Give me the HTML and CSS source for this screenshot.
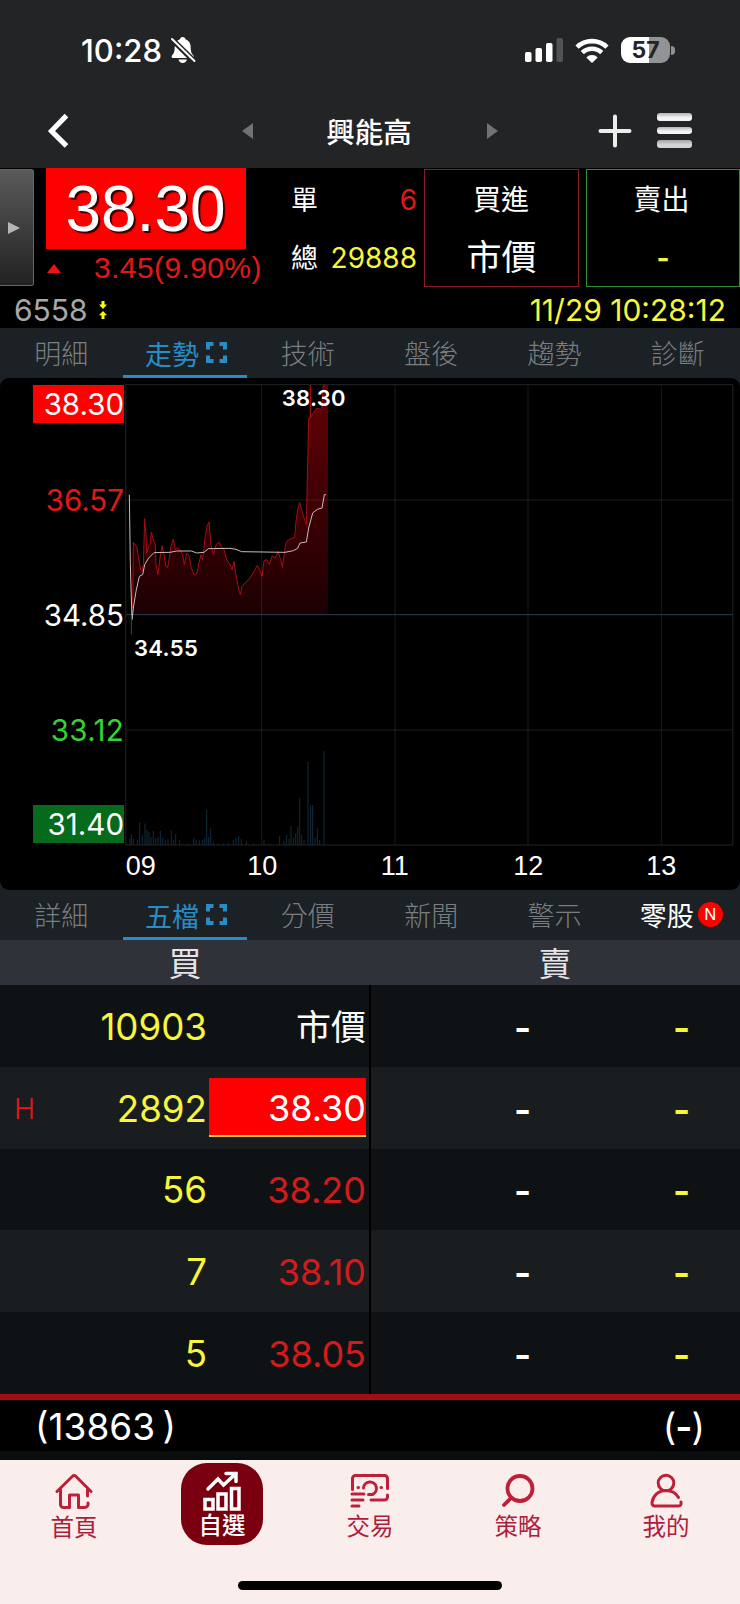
FILE: index.html
```
<!DOCTYPE html>
<html lang="zh-Hant">
<head>
<meta charset="UTF-8">
<meta name="viewport" content="width=device-width, initial-scale=1">
<title>興能高 6558</title>
<link rel="stylesheet" href="styles.css">
</head>
<body>

<header class="top">
  <div class="status">
    <span class="clock">10:28</span>
    <svg class="bell" width="26" height="28" viewBox="0 0 26 28">
      <path fill="#fff" d="M12.700 1c1.600 0 2.500 1 2.800 2.200 3.500 1.200 5.200 4 5.200 7.800 0 5 1 6.500 2.700 8.600.8 1 .4 2.400-1 2.400H3c-1.400 0-1.800-1.400-1-2.400 1.700-2.100 2.700-3.600 2.700-8.600 0-3.800 1.700-6.600 5.200-7.800C10.200 2 11.100 1 12.700 1zM8.500 23.500h8.400c-.5 2-2 3.500-4.200 3.500s-3.700-1.500-4.200-3.500z"/>
      <path stroke="#222426" stroke-width="5.500" d="M1 2.500l23.500 23"/>
      <path stroke="#fff" stroke-width="2" stroke-linecap="round" d="M2 3l22.500 22"/>
    </svg>
    <svg class="signal" width="38" height="24" viewBox="0 0 38 24">
      <g fill="#fff"><rect y="14" width="6.500" height="10" rx="1.800"/><rect x="10.500" y="10" width="6.500" height="14" rx="1.800"/><rect x="21" y="5" width="6.500" height="19" rx="1.800"/></g>
      <rect x="31.500" width="6.500" height="24" rx="1.800" fill="#505254"/>
    </svg>
    <svg class="wifi" width="34" height="25" viewBox="0 0 34 25" fill="none" stroke="#fff" stroke-width="4.600">
      <path d="M2 9.200a21.500 21.500 0 0 1 30 0M7.300 14.600a14 14 0 0 1 19.400 0"/>
      <path fill="#fff" stroke="none" d="M17 25l-5.700-5.600a8 8 0 0 1 11.400 0z"/>
    </svg>
    <span class="battery">57</span>
    <span class="battery-tip"></span>
  </div>
  <nav class="nav">
    <svg width="20" height="36" viewBox="0 0 20 36" fill="none" stroke="#fff" stroke-width="5.200"><path d="M18.500 2.500L3.500 18l15 15"/></svg>
    <svg class="prev" width="11" height="16" viewBox="0 0 11 16"><path fill="#707375" d="M11 0v16L0 8z"/></svg>
    <h1>興能高</h1>
    <svg width="11" height="16" viewBox="0 0 11 16"><path fill="#707375" d="M0 0v16l11-8z"/></svg>
    <svg class="add" width="34" height="34" viewBox="0 0 34 34" stroke="#eceded" stroke-width="4" stroke-linecap="round"><path d="M17 2.500v29M2.500 17h29"/></svg>
    <div class="menu"><i></i><i></i><i></i></div>
  </nav>
</header>

<section class="quote">
  <div class="handle"><svg width="12" height="12" viewBox="0 0 12 12"><path fill="#b5b5b5" d="M0 0v12l12-6z"/></svg></div>
  <div class="price">
    <strong>38.30</strong>
    <p><svg width="14" height="9" viewBox="0 0 14 9"><path fill="#f31111" d="M7 0l7 9H0z"/></svg><span>3.45(9.90%)</span></p>
  </div>
  <dl class="volume">
    <dt>單</dt><dd class="up">6</dd>
    <dt>總</dt><dd>29888</dd>
  </dl>
  <div class="deal buy"><span>買進</span><b>市價</b></div>
  <div class="deal sell"><span>賣出</span><b>-</b></div>
</section>

<div class="info">
  <span class="code">6558</span>
  <svg width="8" height="18" viewBox="0 0 8 18"><path fill="#ff0" d="M2.500 0h3v3.500H8L4 8 0 3.500h2.500zM4 10l4 4.300H5.500V18h-3v-3.700H0z"/></svg>
  <time>11/29 10:28:12</time>
</div>

<div class="tabs">
  <span>明細</span>
  <span class="on">走勢<svg width="21" height="21" viewBox="0 0 21 21"><path d="M7.500 2H2v5.500M13.500 2H19v5.500M19 13.500V19h-5.500M7.500 19H2v-5.500"/></svg></span>
  <span>技術</span><span>盤後</span><span>趨勢</span><span>診斷</span>
</div>

<section class="chart-bg">
<div class="chart">
  <div class="axis">
    <span class="limit-up">38.30</span>
    <span class="up">36.57</span>
    <span>34.85</span>
    <span class="down">33.12</span>
    <span class="limit-down">31.40</span>
  </div>
  <svg class="plot" viewBox="372 0 1848 1536">
    <defs>
      <linearGradient id="area" gradientUnits="userSpaceOnUse" x1="0" y1="20" x2="0" y2="710">
        <stop offset="0" stop-color="#640006"/><stop offset="1" stop-color="#1c0003"/>
      </linearGradient>
    </defs>
    <path class="area" d="M396 710L400 493l10 12 5 30 7 40 4 5 4-20 4-138 4 48 2 55 6-20 4-5 4-38 6 23 6 15 2 60 6 30 6-50 6-37 6 27 6 35 5 3 5-28 5-35 7-22 6 32 6-5 8 5 8 15 5 30 7-35 8 10 6 35 8 20 8-2 7-33 6-25 5 15 7-65 6-35 6-13 6 68 7 30 8-30 10-8 6 13 8 10 8 30 10 15 6 15 6-25 6 40 8 45 5 15 5-25 9-10 15-15 12-20 10-18 8 16 6 17 6-47 8-3 8 15 8-25 10 5 8-20 8 25 5 23 6-43 5-30 8-10 18-7 4-48 6-40 5-17 6 22 7 25 7 20 3-140 4-180h5V20v100l9-15 10-15 15 5 5-75h14v690z"/>
    <path class="line" d="M398 690L400 493l10 12 5 30 7 40 4 5 4-20 4-138 4 48 2 55 6-20 4-5 4-38 6 23 6 15 2 60 6 30 6-50 6-37 6 27 6 35 5 3 5-28 5-35 7-22 6 32 6-5 8 5 8 15 5 30 7-35 8 10 6 35 8 20 8-2 7-33 6-25 5 15 7-65 6-35 6-13 6 68 7 30 8-30 10-8 6 13 8 10 8 30 10 15 6 15 6-25 6 40 8 45 5 15 5-25 9-10 15-15 12-20 10-18 8 16 6 17 6-47 8-3 8 15 8-25 10 5 8-20 8 25 5 23 6-43 5-30 8-10 18-7 4-48 6-40 5-17 6 22 7 25 7 20 3-140 4-180h5V20v100l9-15 10-15 15 5 5-75h8"/>
    <path class="grid" d="M378 366H2198M378 1056H2198M785 21V1401M1185 21V1401M1584 21V1401M1984 21V1401"/>
    <path class="frame" d="M377.500 20H2198.500V1401H377.500z"/>
    <path class="base" d="M378 710H2198"/>
    <path class="vol" d="M390 1401v-20M394 1401v-32M400 1401v-18M412 1401v-15M419 1401v-68M427 1401v-30M435 1401v-65M441 1401v-45M447 1401v-40M453 1401v-24M460 1401v-42M467 1401v-20M474 1401v-24M481 1401v-42M488 1401v-22M496 1401v-14M504 1401v-17M514 1401v-44M521 1401v-16M527 1401v-33M539 1401v-15M550 1401v-4M564 1401v-4M581 1401v-21M588 1401v-16M598 1401v-14M608 1401v-16M614 1401v-22M620 1401v-105M626 1401v-24M632 1401v-50M640 1401v-8M655 1401v-5M670 1401v-5M685 1401v-7M700 1401v-15M708 1401v-22M716 1401v-28M724 1401v-18M739 1401v-12M760 1401v-4M792 1401v-16M810 1401v-4M839 1401v-28M852 1401v-12M860 1401v-30M867 1401v-18M873 1401v-57M880 1401v-22M887 1401v-35M893 1401v-55M899 1401v-141M905 1401v-30M912 1401v-15M924 1401v-250M932 1401v-120M938 1401v-120M945 1401v-22M952 1401v-50M959 1401v-14M972 1401v-282"/>
    <path class="avg" d="M388 350l3 210 5 165 4-35 8-50 10-45 10-5 6-30 12-20 16-16 48-1 20-4h45l15 6 22-2 13-11 65-1 18 3 17 7 130 2 25-5 13-7 7-16 19-3 7-42 12-45 14-11 14-4 7-40h5"/>
    <path class="low" d="M394 712v57"/>
    <g class="mark"><text x="845" y="84">38.30</text><text x="402" y="834">34.55</text></g>
    <g class="hours"><text x="422" y="1490">09</text><text x="787" y="1490">10</text><text x="1184" y="1490">11</text><text x="1585" y="1490">12</text><text x="1984" y="1490">13</text></g>
  </svg>
</div>
</section>

<div class="tabs">
  <span>詳細</span>
  <span class="on">五檔<svg width="21" height="21" viewBox="0 0 21 21"><path d="M7.500 2H2v5.500M13.500 2H19v5.500M19 13.500V19h-5.500M7.500 19H2v-5.500"/></svg></span>
  <span>分價</span><span>新聞</span><span>警示</span>
  <span class="odd">零股<em>N</em></span>
</div>

<section class="book">
  <div class="head"><span>買</span><span>賣</span></div>
  <div class="row"><div class="bid"><i></i><span class="qty">10903</span><span class="px market">市價</span></div><div class="ask"><b>-</b><b class="qty">-</b></div></div>
  <div class="row"><div class="bid"><i>H</i><span class="qty">2892</span><span class="px hit">38.30</span></div><div class="ask"><b>-</b><b class="qty">-</b></div></div>
  <div class="row"><div class="bid"><i></i><span class="qty">56</span><span class="px up">38.20</span></div><div class="ask"><b>-</b><b class="qty">-</b></div></div>
  <div class="row"><div class="bid"><i></i><span class="qty">7</span><span class="px up">38.10</span></div><div class="ask"><b>-</b><b class="qty">-</b></div></div>
  <div class="row"><div class="bid"><i></i><span class="qty">5</span><span class="px up">38.05</span></div><div class="ask"><b>-</b><b class="qty">-</b></div></div>
</section>
<div class="sum"><span>(13863 )</span><span>(<b>-</b>)</span></div>

<footer class="dock">
  <div class="menu-items">
    <a class="home">
      <svg width="38" height="37" viewBox="0 0 38 37"><path d="M2 18.500L17.500 3.200a2.300 2.300 0 0 1 3.300 0L36 18.500M5.500 16v15.500a3 3 0 0 0 3 3h6V22h9v12.500h6a3.500 3.500 0 0 0 3.500-4.500M32.500 16v7"/></svg>首頁</a>
    <a class="sel">
      <svg width="40" height="40" viewBox="0 0 40 40"><path d="M6 18l10-10 5.500 6L33.500 3M24 2.500h10v8M3 28.500h8V38H3zM16 23h8v15h-8zM29.500 17.500H37V38h-7.500z"/></svg>自選</a>
    <a>
      <svg width="40" height="36" viewBox="0 0 40 36"><path d="M2.500 16.500V5.500a3 3 0 0 1 3-3h29a3 3 0 0 1 3 3v10M37.500 22v2a3 3 0 0 1-3 3H21M2 21h12M2 27h11M2 33h7M13.500 15a6.500 6.500 0 1 1 9 6.500h-4M8 14.500h.5M31 14.500h.5"/></svg>交易</a>
    <a>
      <svg width="36" height="36" viewBox="0 0 36 36"><circle cx="20" cy="15.500" r="12.500" stroke-width="3.800"/><path stroke-width="3.800" d="M11.500 24.500L4 32"/></svg>策略</a>
    <a>
      <svg width="36" height="36" viewBox="0 0 36 36"><circle cx="18" cy="10" r="7.800"/><path d="M30.500 24.500C28 20 23.500 17.500 18 17.500c-7.500 0-13 5-14 12-.2 2 1 3.500 2.500 3.500h24c2 0 3-1.500 2.500-4"/></svg>我的</a>
  </div>
  <div class="home-bar"></div>
</footer>

</body>
</html>
```

FILE: styles.css
```
:root {
  --red: #e01818;
  --yellow: #f6f63c;
  --blue: #2a8cc4;
  --tab: #1b2124;
}

* { box-sizing: border-box; }

body {
  margin: 0;
  width: 740px;
  height: 1604px;
  overflow: hidden;
  background: #000;
  color: #fff;
  font-family: Inter, "Noto Sans CJK TC", sans-serif;
  font-weight: 400;
}

svg { display: block; flex: none; }
i, em { font-style: normal; }

/* ---- status bar + title ---- */
.top {
  height: 168px;
  background: #222426;
}

.status {
  display: flex;
  align-items: center;
  height: 100px;
  padding-left: 81px;
}

.clock { width: 89px; font-size: 31px; font-weight: 500; }
.bell { margin-right: 329px; }
.signal { margin-right: 12px; }
.wifi { margin-right: 12px; }

.battery {
  width: 49px;
  height: 26px;
  border-radius: 9px;
  background: linear-gradient(90deg, #fff 57%, #919395 57%);
  color: #222426;
  font-size: 23px;
  font-weight: 700;
  line-height: 26px;
  text-align: center;
}

.battery-tip {
  width: 4px;
  height: 9px;
  margin-left: 1px;
  border-radius: 0 4px 4px 0;
  background: #919395;
}

.nav {
  display: flex;
  align-items: center;
  height: 61px;
  padding-left: 48px;
}

.nav h1 {
  width: 234px;
  margin: 0;
  padding-right: 2px;
  font-size: 28.500px;
  font-weight: 500;
  text-align: center;
}

.prev { margin-left: 174px; }
.add { margin-left: 100px; }

.menu {
  display: flex;
  flex-direction: column;
  gap: 6px;
  margin-left: 25px;
}

.menu i {
  width: 35px;
  height: 7.500px;
  border-radius: 3px;
  background: linear-gradient(#b4b4b8, #f4f4f6 60%);
}
.menu i:last-child { background: linear-gradient(#a4a4a8, #d4d4d6 60%); }

/* ---- quote ---- */
.quote {
  display: flex;
  height: 120px;
}

.handle {
  display: flex;
  align-items: center;
  width: 34px;
  height: 117px;
  margin-top: 1px;
  padding-left: 8px;
  border: 1px solid #666;
  border-left: 0;
  border-radius: 0 3px 3px 0;
  background: linear-gradient(#5a5a5a, #222);
}

.price { width: 250px; padding-left: 12px; }

.price strong {
  display: block;
  width: 200px;
  height: 81px;
  padding-right: 1px;
  background: #f00;
  font: 64px/83px "Liberation Sans", sans-serif;
  text-align: center;
  text-shadow: 2px 2px 1px #300;
}

.price p {
  display: flex;
  align-items: center;
  gap: 33px;
  height: 38px;
  margin: 0;
  padding-left: 1px;
  color: var(--red);
  font: 30px "Liberation Sans", sans-serif;
  letter-spacing: .4px;
}

.volume {
  display: grid;
  grid-template-columns: 28px 1fr;
  grid-auto-rows: 58px;
  align-items: center;
  width: 126px;
  height: 116px;
  margin: 3px 14px 0 7px;
  font-size: 27px;
}
.volume dt { margin-top: -3px; }
.volume dd { margin: 0; color: var(--yellow); font-size: 28px; text-align: right; }
.volume dd.up { color: var(--red); }

.deal {
  display: flex;
  flex-direction: column;
  align-items: center;
  width: 155px;
  height: 118px;
  margin: 1px 0 0 -7px;
  border: 1px solid #8c1c2c;
  font-size: 28px;
}
.deal span { height: 56px; padding-right: 1px; line-height: 60px; }
.deal b { font-size: 35px; font-weight: 400; line-height: 63px; }
.deal.sell { width: 154px; margin-left: 7px; border-color: #2f8f2f; }
.deal.sell span { padding-right: 3px; }
.deal.sell b { color: var(--yellow); font-size: 28px; font-weight: 700; line-height: 65px; }

.info {
  display: flex;
  align-items: center;
  height: 40px;
  padding: 3px 14px 0 14px;
}
.info .code { width: 85px; color: #a8a8aa; font-size: 30px; }
.info time { margin-left: auto; color: var(--yellow); font-size: 30px; }

/* ---- tabs ---- */
.tabs {
  display: flex;
  height: 50px;
  background: var(--tab);
  color: #7a7e80;
  font-size: 27px;
  font-weight: 300;
}

.tabs span {
  display: flex;
  flex: none;
  align-items: center;
  justify-content: center;
  gap: 7px;
  width: 16.6667%;
  padding: 0 1px 1px 0;
}

.tabs .on {
  color: var(--blue);
  padding: 3px 0 0 2px;
  border-bottom: 3px solid var(--blue);
  font-weight: 400;
}
.tabs svg { margin-top: -2px; fill: none; stroke: var(--blue); stroke-width: 4; }
.tabs .odd { gap: 4px; padding-left: 7px; color: #fff; font-weight: 400; }

.odd em {
  width: 25px;
  height: 25px;
  border-radius: 50%;
  background: #f00;
  font-size: 16px;
  line-height: 25px;
  text-align: center;
}

/* ---- chart ---- */
.chart-bg { background: var(--tab); }

.chart {
  display: flex;
  height: 512px;
  border-radius: 9px;
  background: #000;
}

.axis {
  display: grid;
  grid-template-rows: 38px 154px 76px 152px 38px;
  align-content: start;
  align-items: center;
  width: 124px;
  padding: 7px 0 0 33px;
  font-size: 29.500px;
  line-height: 38px;
  text-align: right;
}
.axis .up { color: var(--red); }
.axis .down { padding-top: 2px; color: #35d435; letter-spacing: .3px; }
.limit-up { background: #f00; }
.limit-down { background: #056a1c; }

.plot { width: 616px; height: 512px; fill: none; stroke-width: 3; }
.area { fill: url(#area); }
.line { stroke: #a30d14; }
.grid { stroke: #fff; stroke-opacity: .1; }
.frame { stroke: #242424; }
.base { stroke: #2c3c55; }
.vol { stroke: #142c3b; }
.avg { stroke: #c9bdb8; }
.low { stroke: #14651c; }
.plot text { fill: #fff; }
.mark { font-size: 66px; font-weight: 600; letter-spacing: 1px; }
.hours { font: 81px "Liberation Sans", sans-serif; text-anchor: middle; }

/* ---- five-level book ---- */
.head {
  display: flex;
  height: 45px;
  background: #30323a;
  color: #e4e4e6;
  font-size: 33px;
  line-height: 49px;
  text-align: center;
}
.head span { flex: 1; }

.row {
  display: flex;
  gap: 2px;
  height: 81.800px;
  font-size: 37px;
}
.row > div { display: flex; align-items: center; background: #0f1215; }
.row:nth-child(odd) > div { background: #191d1f; }

.bid { width: 369px; padding-right: 3px; }
.bid i { width: 67px; padding: 2px 0 0 14px; color: var(--red); font-size: 28.500px; font-weight: 300; }
.bid .qty { width: 140px; padding-top: 1px; font-size: 36.700px; text-align: right; }
.qty { color: var(--yellow); }

.px {
  width: 157px;
  height: 59px;
  margin-left: 2px;
  font-size: 36px;
  line-height: 61px;
  text-align: right;
}
.px.market { font-size: 35px; line-height: 63px; }
.px.up { color: #d01c1c; }
.px.hit { border-bottom: 2px solid #ffc83c; background: #f00; }

.ask { width: 369px; padding: 3px 0 0 143px; }
.ask b { flex: none; width: 159px; font-weight: 600; }
.ask b.qty { width: auto; }

.sum {
  display: flex;
  justify-content: space-between;
  height: 66px;
  padding: 0 36px 0 35px;
  border-top: 6px solid #a30d0d;
  border-bottom: 9px solid #090d0e;
  font-size: 37px;
  line-height: 53px;
  word-spacing: -3px;
}
.sum b { font-weight: 600; }
.sum span:last-child { letter-spacing: -1px; }

/* ---- bottom menu ---- */
.dock {
  height: 144px;
  background: #faeeed;
}

.menu-items {
  display: flex;
  height: 121px;
  padding-top: 3px;
}

.menu-items a {
  display: flex;
  flex: 1;
  flex-direction: column;
  align-items: center;
  height: 82px;
  padding-top: 10px;
  color: #ad1d3c;
  font-size: 23.500px;
  font-weight: 400;
  line-height: 35px;
}
.menu-items a.home { line-height: 36px; }
.menu-items svg {
  fill: none;
  stroke: #bd2038;
  stroke-width: 3;
  stroke-linecap: round;
  stroke-linejoin: round;
}

.menu-items a.sel {
  flex: none;
  width: 82px;
  margin: 0 33px;
  padding-top: 8px;
  border-radius: 26px;
  background: #7b000f;
  color: #fff;
  font-weight: 500;
  line-height: 29px;
}
.menu-items .sel svg { stroke: #fff; stroke-width: 3.500; stroke-linejoin: miter; }

.home-bar {
  width: 264px;
  height: 9px;
  margin: 0 auto;
  border-radius: 5px;
  background: #000;
}
```
